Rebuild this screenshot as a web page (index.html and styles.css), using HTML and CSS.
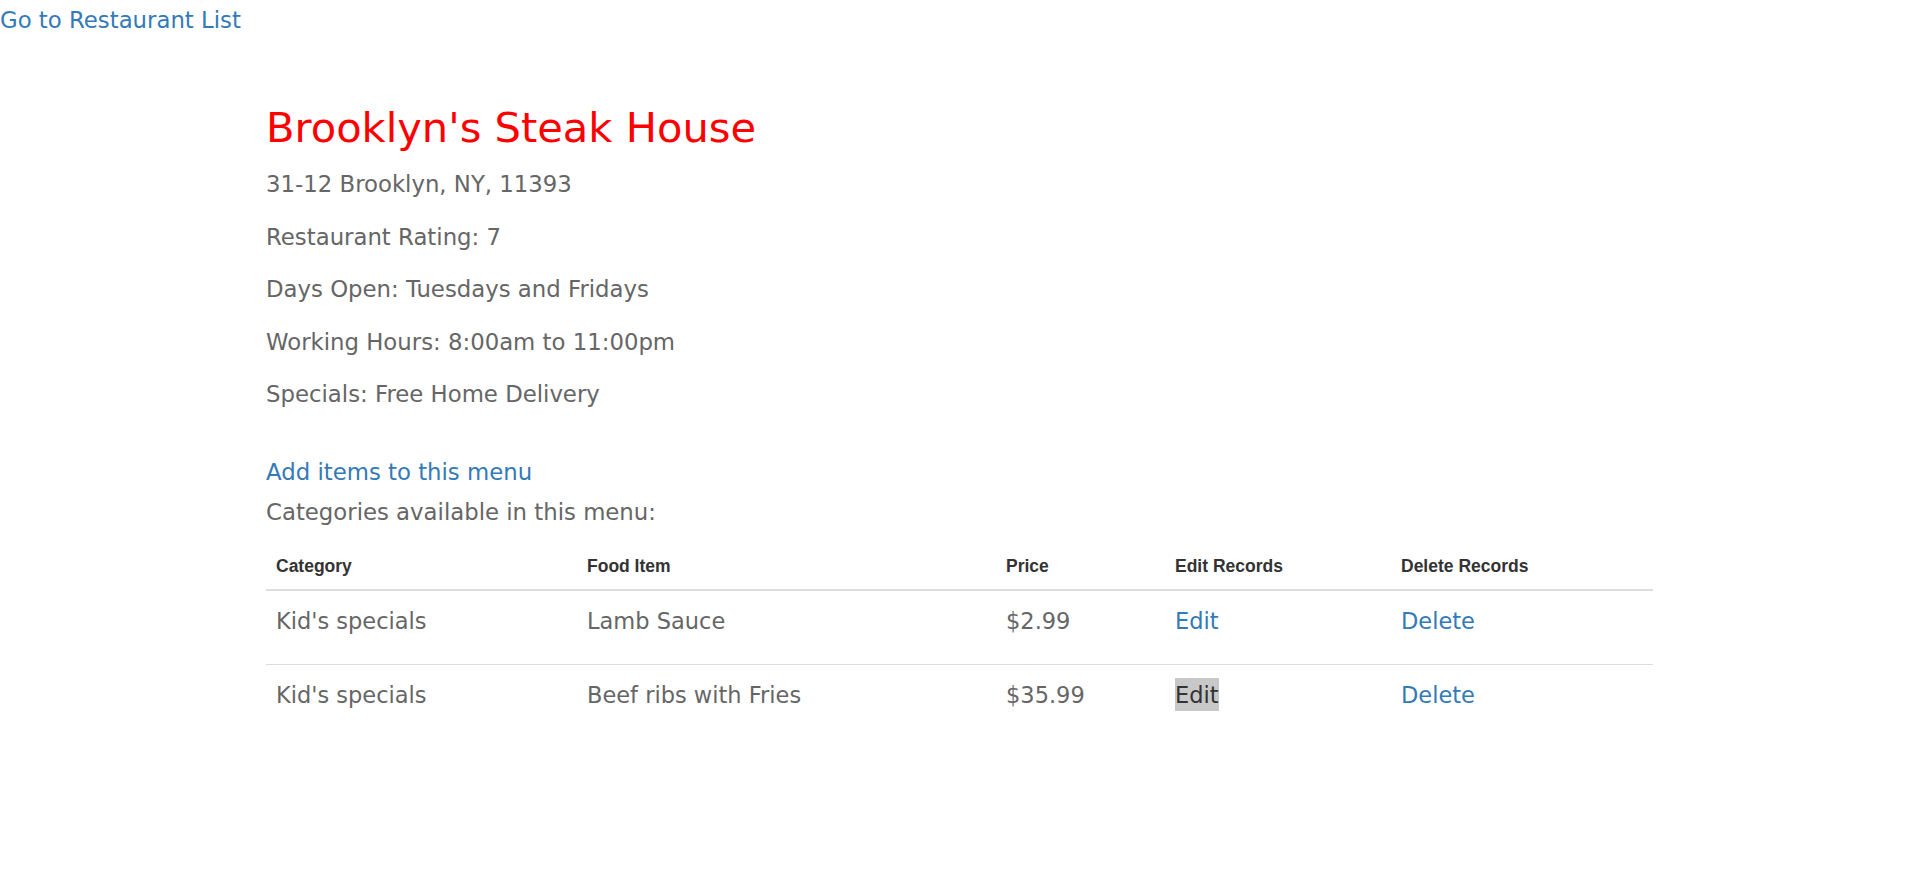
FILE: index.html
```html
<!DOCTYPE html>
<html lang="en">
<head>
<meta charset="utf-8">
<title>Brooklyn's Steak House</title>
<link rel="stylesheet" href="styles.css">
</head>
<body>
<a class="back-link" href="#">Go to Restaurant List</a>
<main class="restaurant">
  <h1 class="restaurant-name">Brooklyn's Steak House</h1>
  <p class="info">31-12 Brooklyn, NY, 11393</p>
  <p class="info">Restaurant Rating: 7</p>
  <p class="info">Days Open: Tuesdays and Fridays</p>
  <p class="info">Working Hours: 8:00am to 11:00pm</p>
  <p class="info">Specials: Free Home Delivery</p>

  <section class="menu">
    <a class="add-link" href="#">Add items to this menu</a>
    <p class="categories-label">Categories available in this menu:</p>
    <table class="menu-table">
      <thead>
        <tr>
          <th class="col-category">Category</th>
          <th class="col-item">Food Item</th>
          <th class="col-price">Price</th>
          <th class="col-edit">Edit Records</th>
          <th class="col-delete">Delete Records</th>
        </tr>
      </thead>
      <tbody>
        <tr>
          <td>Kid's specials</td>
          <td>Lamb Sauce</td>
          <td>$2.99</td>
          <td><a href="#">Edit</a></td>
          <td><a href="#">Delete</a></td>
        </tr>
        <tr>
          <td>Kid's specials</td>
          <td>Beef ribs with Fries</td>
          <td>$35.99</td>
          <td><a href="#" class="selected">Edit</a></td>
          <td><a href="#">Delete</a></td>
        </tr>
      </tbody>
    </table>
  </section>
</main>
</body>
</html>
```
FILE: styles.css
```css
html, body {
  background: #ffffff;
}

body {
  margin: 0;
  font-family: "DejaVu Sans", "Liberation Sans", sans-serif;
  font-size: 22.8px;
  line-height: 40px;
  color: #666666;
}

a {
  color: #337ab7;
  text-decoration: none;
}

.back-link {
  display: block;
  width: max-content;
}

.restaurant {
  width: 1387px;
  margin-left: 266px;
}

.restaurant-name {
  margin: 65px 0 14px;
  font-size: 41.6px;
  line-height: 45px;
  font-weight: normal;
  color: #ff0000;
}

.info {
  margin: 0 0 12.5px;
}

.menu {
  padding-top: 25.5px;
}

.add-link {
  display: block;
  width: max-content;
}

.categories-label {
  margin: 0;
}

.menu-table {
  width: 1387px;
  margin-top: 12px;
  table-layout: fixed;
  border-collapse: separate;
  border-spacing: 0;
}

.menu-table th {
  box-sizing: border-box;
  padding: 10px;
  font-family: "Liberation Sans", Arial, sans-serif;
  font-size: 17.5px;
  line-height: 25px;
  font-weight: bold;
  color: #333333;
  text-align: left;
  vertical-align: bottom;
  border-bottom: 2px solid #dddddd;
}

.col-category { width: 311px; }
.col-item { width: 419px; }
.col-price { width: 169px; }
.col-edit { width: 226px; }
.col-delete { width: 262px; }

.menu-table td {
  padding: 10px 10px 23px;
  font-size: 22.5px;
  line-height: 40px;
  text-align: left;
  vertical-align: top;
}

.menu-table tbody tr + tr td {
  border-top: 1px solid #dddddd;
}

.selected {
  padding: 4px 0 3px;
  background: #c8c8c8;
  color: #333333;
}
```
